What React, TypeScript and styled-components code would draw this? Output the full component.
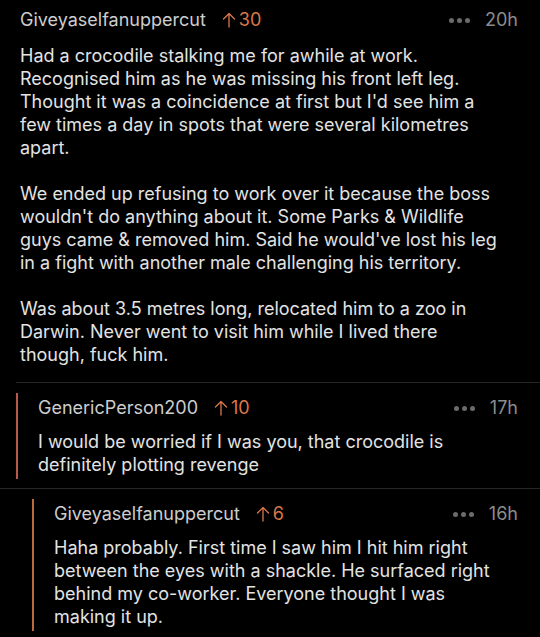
import React from "react";
import styled, { createGlobalStyle } from "styled-components";

const GlobalStyle = createGlobalStyle`
  html, body {
    margin: 0;
    padding: 0;
    background: #000;
  }
  body {
    font-family: Inter, "Noto Sans", "Liberation Sans", sans-serif;
    -webkit-font-smoothing: antialiased;
  }
`;

type CommentData = {
  author: string;
  score: number;
  age: string;
  depth: number;
  paragraphs: string[][];
};

const comments: CommentData[] = [
  {
    author: "Giveyaselfanuppercut",
    score: 30,
    age: "20h",
    depth: 0,
    paragraphs: [
      [
        "Had a crocodile stalking me for awhile at work.",
        "Recognised him as he was missing his front left leg.",
        "Thought it was a coincidence at first but I'd see him a",
        "few times a day in spots that were several kilometres",
        "apart.",
      ],
      [
        "We ended up refusing to work over it because the boss",
        "wouldn't do anything about it. Some Parks & Wildlife",
        "guys came & removed him. Said he would've lost his leg",
        "in a fight with another male challenging his territory.",
      ],
      [
        "Was about 3.5 metres long, relocated him to a zoo in",
        "Darwin. Never went to visit him while I lived there",
        "though, fuck him.",
      ],
    ],
  },
  {
    author: "GenericPerson200",
    score: 10,
    age: "17h",
    depth: 1,
    paragraphs: [
      [
        "I would be worried if I was you, that crocodile is",
        "definitely plotting revenge",
      ],
    ],
  },
  {
    author: "Giveyaselfanuppercut",
    score: 6,
    age: "16h",
    depth: 2,
    paragraphs: [
      [
        "Haha probably. First time I saw him I hit him right",
        "between the eyes with a shackle. He surfaced right",
        "behind my co-worker. Everyone thought I was",
        "making it up.",
      ],
    ],
  },
];

const depthColors = ["transparent", "#b9574b", "#bb6a3c"];

const Page = styled.div`
  width: 540px;
  min-height: 637px;
  background: #000;
  display: flex;
  flex-direction: column;
`;

const CommentBlock = styled.div<{ $depth: number }>`
  margin-left: ${(p) => (p.$depth === 1 ? 16 : 0)}px;
  padding-left: ${(p) => (p.$depth === 2 ? 32 : 0)}px;
  border-top: ${(p) => (p.$depth === 0 ? "none" : "1px solid #262626")};
  padding-top: 10px;
  padding-bottom: ${(p) => (p.$depth === 0 ? 16 : 9)}px;
`;

const Thread = styled.div<{ $depth: number }>`
  border-left: ${(p) => (p.$depth === 0 ? "none" : `2px solid ${depthColors[p.$depth]}`)};
  padding: ${(p) => (p.$depth === 0 ? "0 22px 0 20px" : "5px 22px 3px 20px")};
  display: flex;
  flex-direction: column;
`;

const Header = styled.div`
  display: flex;
  align-items: center;
  height: 20px;
  line-height: 20px;
  font-size: 18px;
`;

const Author = styled.span`
  color: #cdcdcd;
  font-weight: 400;
`;

const Score = styled.span`
  display: inline-flex;
  align-items: center;
  gap: 3px;
  margin-left: 16px;
  color: #d9774b;
`;

const Spacer = styled.div`
  flex: 1;
`;

const Dots = styled.span`
  display: inline-flex;
  gap: 3px;
  margin-right: 15px;
`;

const Dot = styled.span`
  width: 5px;
  height: 5px;
  border-radius: 50%;
  background: #6b6b6b;
`;

const Age = styled.span`
  color: #8c8c8c;
`;

const Body = styled.div<{ $depth: number }>`
  margin-top: ${(p) => (p.$depth === 0 ? 14 : 12)}px;
  color: #e3e3e3;
  font-size: 18px;
  line-height: 23px;
  display: flex;
  flex-direction: column;
  gap: 23px;
  white-space: nowrap;
`;

const Para = styled.p`
  margin: 0;
`;

const UpArrow = () => (
  <svg width="14" height="16" viewBox="0 0 14 16" fill="none">
    <path
      d="M7 15V1.5M1.5 7L7 1.5L12.5 7"
      stroke="#d9774b"
      strokeWidth="1.3"
      strokeLinecap="round"
      strokeLinejoin="round"
    />
  </svg>
);

const Comment = ({ c }: { c: CommentData }) => (
  <CommentBlock $depth={c.depth}>
    <Thread $depth={c.depth}>
      <Header>
        <Author>{c.author}</Author>
        <Score>
          <UpArrow />
          {c.score}
        </Score>
        <Spacer />
        <Dots>
          <Dot />
          <Dot />
          <Dot />
        </Dots>
        <Age>{c.age}</Age>
      </Header>
      <Body $depth={c.depth}>
        {c.paragraphs.map((lines, i) => (
          <Para key={i}>
            {lines.map((l, j) => (
              <React.Fragment key={j}>
                {j > 0 && <br />}
                {l}
              </React.Fragment>
            ))}
          </Para>
        ))}
      </Body>
    </Thread>
  </CommentBlock>
);

export default function App() {
  return (
    <>
      <GlobalStyle />
      <Page>
        {comments.map((c, i) => (
          <Comment key={i} c={c} />
        ))}
      </Page>
    </>
  );
}
